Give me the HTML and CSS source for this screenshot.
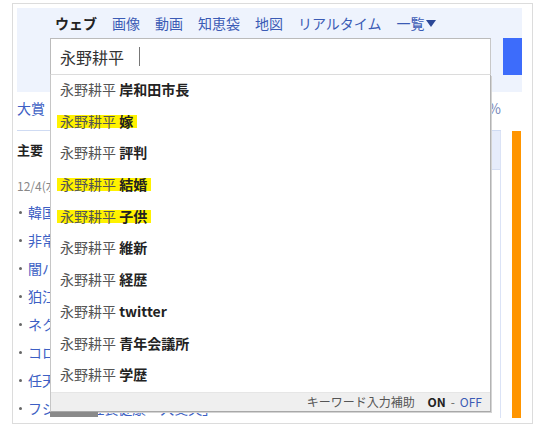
FILE: index.html
```html
<!DOCTYPE html>
<html lang="ja">
<head>
<meta charset="utf-8">
<title>検索</title>
<link rel="stylesheet" href="styles.css">
</head>
<body>
<div class="frame">
  <header class="head">
    <nav class="tabs">
      <span class="tab tab-on">ウェブ</span>
      <a class="tab">画像</a>
      <a class="tab">動画</a>
      <a class="tab">知恵袋</a>
      <a class="tab">地図</a>
      <a class="tab">リアルタイム</a>
      <a class="tab">一覧<svg class="caret" width="10" height="7" viewBox="0 0 10 7"><polygon points="0,0 10,0 5,7" fill="#2b4797"/></svg></a>
    </nav>
    <div class="search">
      <div class="box">
        <div class="field"><span class="q">永野耕平</span><span class="cursor"></span></div>
        <div class="suggest">
          <ul class="list">
            <li class="item"><span class="pre">永野耕平</span> <b>岸和田市長</b></li>
            <li class="item"><span class="mark"><span class="pre">永野耕平</span> <b>嫁</b></span></li>
            <li class="item"><span class="pre">永野耕平</span> <b>評判</b></li>
            <li class="item"><span class="mark"><span class="pre">永野耕平</span> <b>結婚</b></span></li>
            <li class="item"><span class="mark"><span class="pre">永野耕平</span> <b>子供</b></span></li>
            <li class="item"><span class="pre">永野耕平</span> <b>維新</b></li>
            <li class="item"><span class="pre">永野耕平</span> <b>経歴</b></li>
            <li class="item"><span class="pre">永野耕平</span> <b>twitter</b></li>
            <li class="item"><span class="pre">永野耕平</span> <b>青年会議所</b></li>
            <li class="item"><span class="pre">永野耕平</span> <b>学歴</b></li>
          </ul>
          <div class="foot">キーワード入力補助 <b>ON</b><span class="sep">-</span><a class="off">OFF</a></div>
          <div class="shade"></div>
        </div>
      </div>
      <div class="btn"></div>
    </div>
  </header>
  <main class="main">
    <div class="toprow"><a class="award">大賞</a><span class="pct">%</span></div>
    <div class="left">
      <div class="h">主要</div>
      <div class="date">12/4(水) 15:30更新</div>
      <ul class="news">
        <li>韓国 非常戒厳を解除へ</li>
        <li>非常戒厳 国会が解除要求</li>
        <li>闇バイト 強盗事件で逮捕</li>
        <li>狛江市の強盗殺人 初公判</li>
        <li>ネクソン 新作を発表</li>
        <li>コロナ後の観光需要が回復</li>
        <li>任天堂 新型機の噂に言及</li>
        <li>フジ 設計 社長健康「大丈夫」</li>
      </ul>
    </div>
    <div class="side"><div class="side-top"></div></div>
    <div class="bar"></div>
  </main>
</div>
</body>
</html>
```

FILE: styles.css
```css
* {
  box-sizing: border-box;
  margin: 0;
  padding: 0;
}

body {
  margin: 0;
  background: #fff;
  font-family: "Noto Sans CJK JP", "Noto Sans", sans-serif;
}

a {
  text-decoration: none;
}

.frame {
  margin: 3px 0 0 12px;
  width: 521px;
  height: 421px;
  border: 1px solid #dcdcdc;
  padding: 4px;
  overflow: hidden;
}

.head {
  width: 505px;
  height: 84px;
  background: #eef3fd;
  padding-top: 5px;
}

.tabs {
  display: flex;
  gap: 15px;
  padding-left: 38px;
  height: 20px;
  line-height: 20px;
  font-size: 14px;
  color: #3b5bb5;
  white-space: nowrap;
}

.tab {
  color: #3b5bb5;
  display: flex;
  align-items: center;
}

.tab-on {
  font-weight: 700;
  color: #222;
}

.caret {
  margin-left: 1px;
}

.search {
  display: flex;
  margin: 5px 0 0 33px;
  height: 37px;
}

.box {
  position: relative;
  width: 441px;
}

.field {
  height: 37px;
  background: #fff;
  border: 1px solid #bbb;
  border-bottom-color: #dcdcdc;
  border-right-color: #c8c8c8;
  display: flex;
  align-items: center;
  padding-left: 9px;
  font-size: 16px;
  color: #333;
}

.cursor {
  width: 1px;
  height: 19px;
  background: #777;
  margin-left: 15px;
}

.suggest {
  position: absolute;
  top: 37px;
  left: 0;
  width: 441px;
  height: 337px;
  background: #fff;
  border: 1px solid #c6c6c6;
  border-top: 0;
  border-right-color: #b3b3b3;
  border-bottom-color: #a8a8a8;
  box-shadow: 1px 1px 0 #d4d4d4;
  z-index: 2;
}

.list {
  list-style: none;
}

.item {
  height: 31.7px;
  padding: 4px 0 0 9px;
  line-height: 20px;
  font-size: 14px;
  color: #555;
  white-space: nowrap;
}

.item b {
  color: #222;
  font-weight: 700;
}

.mark {
  display: inline-block;
  line-height: 13px;
  height: 13px;
  background: #fff200;
  padding: 0 4px 0 3px;
  margin-left: -3px;
}

.foot {
  height: 19px;
  background: #efefef;
  border-top: 1px solid #e6e6e6;
  font-size: 12px;
  line-height: 18px;
  text-align: right;
  padding-right: 8px;
  color: #555;
  white-space: nowrap;
}

.foot b {
  color: #222;
  margin-left: 10px;
}

.sep {
  color: #666;
  margin: 0 5px;
}

.off {
  color: #3b5bb5;
}

.shade {
  position: absolute;
  left: -1px;
  top: calc(100% + 1px);
  width: 48px;
  height: 5px;
  background: #8a8a8a;
}

.btn {
  width: 19px;
  height: 37px;
  margin-left: 12px;
  background: #3d6cfb;
}

.main {
  display: grid;
  grid-template-columns: 474px 10px 11px 9px;
  grid-template-rows: 39px 287px;
}

.toprow {
  grid-column: 1 / 3;
  grid-row: 1;
  display: flex;
  justify-content: space-between;
  padding-top: 6px;
  line-height: 20px;
  font-size: 14px;
  border-bottom: 1px solid #cfdbf3;
}

.award {
  color: #3d5fc4;
}

.pct {
  color: #7486b8;
}

.left {
  grid-column: 1;
  grid-row: 2;
  padding-top: 9px;
  overflow: hidden;
}

.h {
  font-weight: 700;
  font-size: 13px;
  line-height: 20px;
  color: #222;
}

.date {
  font-size: 12px;
  color: #888;
  line-height: 20px;
  margin-top: 16px;
}

.news {
  list-style: none;
  margin-top: 2px;
}

.news li {
  line-height: 28px;
  height: 28px;
  font-size: 14px;
  color: #3d5fc4;
  white-space: nowrap;
  display: flex;
  align-items: center;
}

.news li::before {
  content: "";
  width: 3px;
  height: 3px;
  border-radius: 50%;
  background: #666;
  margin: 0 6px 0 2px;
}

.side {
  grid-column: 2;
  grid-row: 2;
  border-right: 1px solid #dbe3f6;
}

.side-top {
  height: 39px;
  background: #e6ecfb;
  border-bottom: 1px solid #d5def3;
}

.bar {
  grid-column: 4;
  grid-row: 2;
  background: #ff9500;
}
```
